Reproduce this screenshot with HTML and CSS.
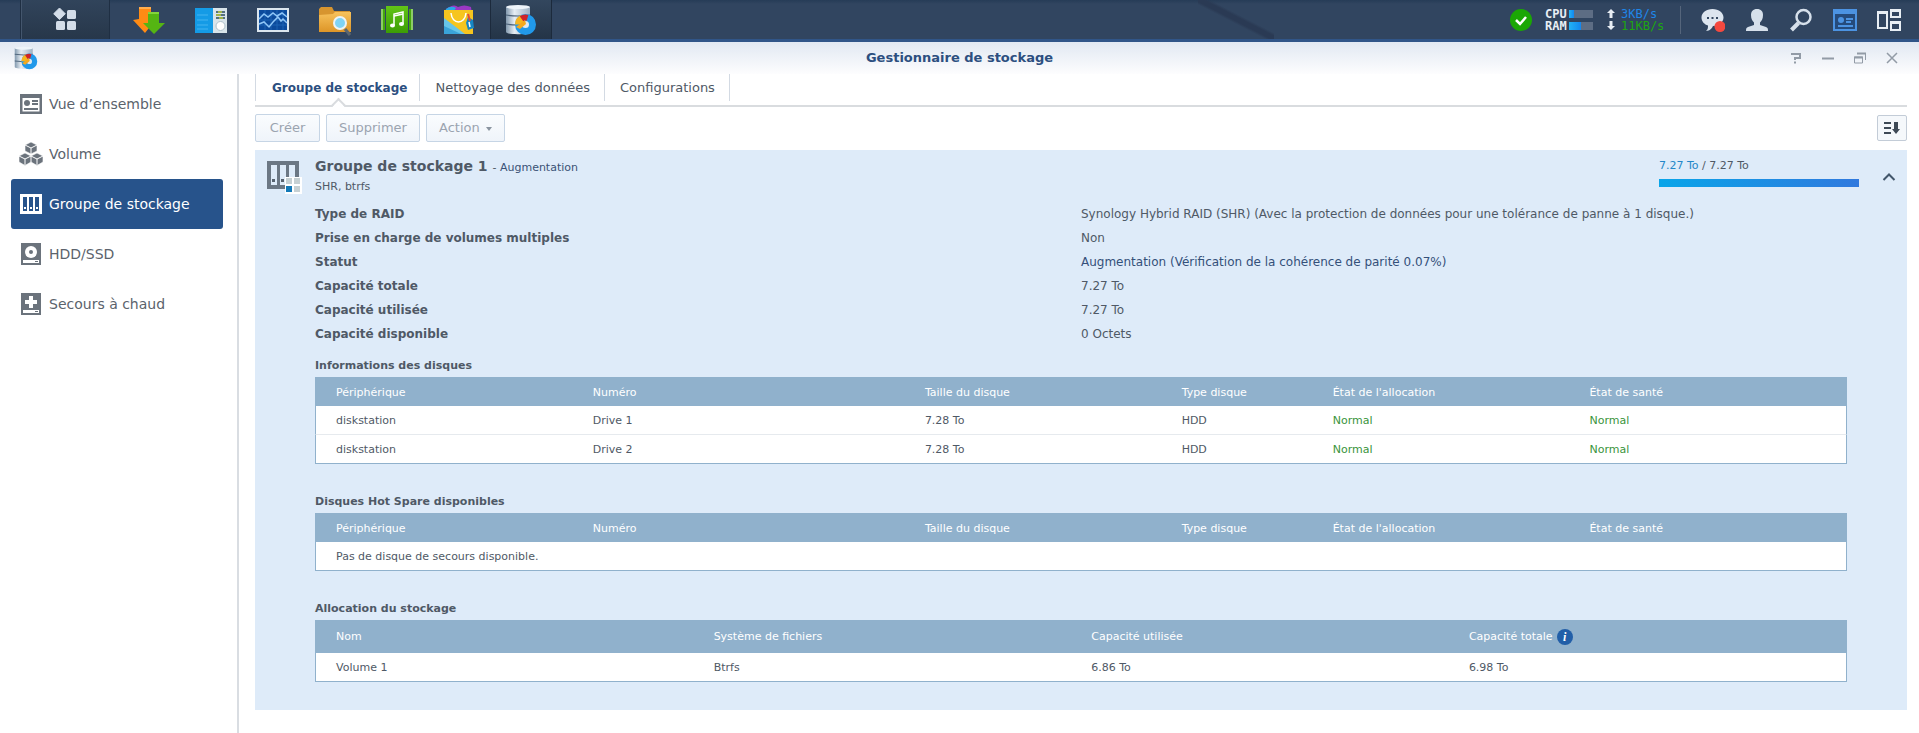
FILE: index.html
```html
<!DOCTYPE html>
<html lang="fr">
<head>
<meta charset="utf-8">
<title>Gestionnaire de stockage</title>
<link rel="stylesheet" href="styles.css">
</head>
<body>
<svg class="defs" aria-hidden="true">
  <defs>
    <linearGradient id="g-cyl" x1="0" x2="1"><stop offset="0" stop-color="#8299ae"/><stop offset=".35" stop-color="#e6edf3"/><stop offset="1" stop-color="#9db0c2"/></linearGradient>
    <linearGradient id="g-folder" x1="0" y1="0" x2="0" y2="1"><stop offset="0" stop-color="#f7c25c"/><stop offset="1" stop-color="#dd9527"/></linearGradient>
    <linearGradient id="g-green" x1="0" y1="0" x2="0" y2="1"><stop offset="0" stop-color="#62c417"/><stop offset="1" stop-color="#3c9d05"/></linearGradient>
    <symbol id="storage" viewBox="0 0 32 32">
      <path d="M1 3v25c0 3 23 3 24 0V3z" fill="url(#g-cyl)"/>
      <ellipse cx="13" cy="3" rx="12" ry="2" fill="#eef4f9"/>
      <path d="M1 11q12 2 24 0M1 20q11 2 24 0" stroke="#4a6077" stroke-width="1.200" fill="none"/>
      <circle cx="20.500" cy="20.500" r="7" fill="#dfe8ee" stroke="#2199ea" stroke-width="7"/>
      <path d="M13.500 20.500a7 7 0 0 1 4-6.300" fill="none" stroke="#f6b51e" stroke-width="7"/>
      <path d="M16.500 14.800a7 7 0 0 1 6-1" fill="none" stroke="#cf2329" stroke-width="6"/>
      <path d="M11 23l9-7 1 4-6 5z" fill="#f4a81c"/>
    </symbol>
  </defs>
</svg>

<header class="taskbar">
  <button class="menu-btn" aria-label="Menu principal">
    <svg width="24" height="24" viewBox="0 0 24 24" fill="#d3dde9"><path d="M6.500 0l5.800 5.800-5.800 5.800L.700 5.800z" stroke="#d3dde9" stroke-linejoin="round"/><rect x="14" y="2" width="9" height="9" rx="1.500"/><rect x="3" y="13" width="9" height="9" rx="1.500"/><rect x="14" y="13" width="9" height="9" rx="1.500"/></svg>
  </button>
  <nav class="apps" aria-label="Applications">
    <button class="app" aria-label="Download Station">
      <svg width="32" height="32" viewBox="0 0 32 32"><path d="M6 3h12v12h5L12 29 0 16l6-1z" fill="#ff8b14"/><path d="M6 3h12v2H6z" fill="#ffad4e"/><path d="M15 8h11v11h6L21 30 10 19h5z" fill="#55b513"/><path d="M15 8h11v2H15z" fill="#83d43a"/></svg>
    </button>
    <button class="app" aria-label="Panneau">
      <svg width="32" height="32" viewBox="0 0 32 32"><rect y="4" width="32" height="25" fill="#d8e4ea"/><rect y="4" width="18" height="25" fill="#149be6"/><path d="M2 11h11M2 16h11M2 21h11M2 25h11" stroke="#45b4f0"/><path d="M21 8h9M21 11h9M21 14h9" stroke="#29495e" stroke-width="1.500"/><path d="M23 8h4M21 11h5M24 14h4" stroke="#b9c93a" stroke-width="1.500"/><circle cx="25.500" cy="22" r="4.500" fill="#fff" stroke="#adc0cb"/></svg>
    </button>
    <button class="app" aria-label="Moniteur de ressources">
      <svg width="32" height="32" viewBox="0 0 32 32"><rect y="4" width="32" height="24" fill="#dce6ee"/><rect x="2" y="6" width="28" height="20" fill="#0b4a9c"/><path d="M8 6v20M14 6v20M20 6v20M26 6v20M2 11h28M2 16h28M2 21h28" stroke="#1c62b3"/><path d="M2 15l5-5 4 3 5-4 4 3 5-3 5 4M2 20l5-2 5 5 4-5 5-5 3 4 2-2 4 4" fill="none" stroke="#8fc6f7" stroke-width="1.500"/></svg>
    </button>
    <button class="app" aria-label="File Station">
      <svg width="32" height="32" viewBox="0 0 32 32"><path d="M0 5l2-2h11l2 4h16v21H0z" fill="#d7952f"/><path d="M0 11l14-1 2-2h16v20H0z" fill="url(#g-folder)"/><path d="M26 25l5 6" stroke="#5a6670" stroke-width="3"/><circle cx="21" cy="19" r="6" fill="#7fd3f4" stroke="#edf3f5" stroke-width="2"/></svg>
    </button>
    <button class="app" aria-label="Audio Station">
      <svg width="32" height="32" viewBox="0 0 32 32"><path d="M0 5h4v21H0zM28 5h4v21h-4z" fill="#44a70b"/><path d="M1 5v21M31 5v21" stroke="#d5f1c3"/><rect x="5" y="2" width="22" height="27" fill="url(#g-green)"/><path d="M13 21V10l9-2v12" fill="none" stroke="#fff" stroke-width="1.500"/><path d="M13 12l9-2" stroke="#fff" stroke-width="1.500"/><ellipse cx="11.500" cy="21.500" rx="2.500" ry="2" fill="#fff"/><ellipse cx="20.500" cy="20" rx="2.500" ry="2" fill="#fff"/></svg>
    </button>
    <button class="app" aria-label="Centre de paquets">
      <svg width="32" height="32" viewBox="0 0 32 32"><path d="M3 5q8-6 12-2 6-3 13 0l1 7H3z" fill="#9b38c4"/><path d="M3 5q5-4 10-1l-3 4H2z" fill="#29a9e8"/><path d="M1 6h29v24H1z" fill="#f6c51f"/><path d="M1 14l21 16H1z" fill="#67c5e9"/><path d="M1 22l17 8H1z" fill="#3aa4da"/><path d="M8 9c1 12 14 12 15 0" stroke="#fff" fill="none" stroke-width="1.500"/><path d="M25 13l5 3 1 8-6 2-2-7z" fill="#1686c4"/><path d="M25 10l2 7" stroke="#e64c37" stroke-width="2"/><path d="M26 18l1 5" stroke="#fff" stroke-width="1.500"/></svg>
    </button>
    <button class="app app-on" aria-label="Gestionnaire de stockage">
      <svg width="32" height="32"><use href="#storage"/></svg>
    </button>
  </nav>
  <div class="tray">
    <svg class="health" width="22" height="22" viewBox="0 0 22 22"><circle cx="11" cy="11" r="11" fill="#1ba705"/><path d="M6 11l4 4 6-7" fill="none" stroke="#fff" stroke-width="2.500"/></svg>
    <div class="load">
      <span>CPU</span><i class="meter"><b class="fill" style="width:20%"></b></i>
      <span>RAM</span><i class="meter"><b class="fill" style="width:48%"></b></i>
    </div>
    <div class="net">
      <svg width="8" height="9" viewBox="0 0 8 9" fill="#e8eef4"><path d="M4 0l4 4H5.500v5h-3V4H0z"/></svg><span class="up">3KB/s</span>
      <svg width="8" height="9" viewBox="0 0 8 9" fill="#e8eef4"><path d="M4 9l4-4H5.500V0h-3v5H0z"/></svg><span class="down">11KB/s</span>
    </div>
    <span class="split"></span>
    <button class="tray-btn" aria-label="Notifications"><svg width="24" height="24" viewBox="0 0 24 24"><path d="M11.500 1C5 1 .500 5 .500 9.500c0 4 3 7 6.500 8 0 2 0 4-2 5.500 4 0 6-3 7-5 6 0 10.500-4 10.500-8.500S18 1 11.500 1z" fill="#dce5ef"/><path d="M6 9h2v2H6zM10.500 9h2v2h-2zM15 9h2v2h-2z" fill="#344861"/><circle cx="19" cy="18.500" r="5.500" fill="#f4493f"/></svg></button>
    <button class="tray-btn" aria-label="Options"><svg width="22" height="24" viewBox="0 0 22 24"><path d="M11 1c4 0 6 2.500 6 6 0 4-1.500 6-3 7.500V17l6 2c2 .700 2 2 2 4H0c0-2 0-3.300 2-4l6-2v-2.500C6.500 13 5 11 5 7c0-3.500 2-6 6-6z" fill="#d6e0eb"/></svg></button>
    <button class="tray-btn" aria-label="Rechercher"><svg width="22" height="24" viewBox="0 0 22 24" fill="none" stroke="#d6e0eb"><circle cx="13.500" cy="9" r="7" stroke-width="2.500"/><path d="M8.500 15l-7 7" stroke-width="4"/></svg></button>
    <button class="tray-btn" aria-label="Widgets"><svg width="24" height="22" viewBox="0 0 24 22"><path d="M1 1h22v20H1z" fill="#254b7c" stroke="#4c93e2" stroke-width="2"/><path d="M1 1h22v4H1z" fill="#4c93e2"/><circle cx="8" cy="11" r="3" fill="#4c93e2"/><path d="M13 10h7M13 13h5M5 17h15" stroke="#4c93e2" stroke-width="2"/></svg></button>
    <button class="tray-btn" aria-label="Vue pilote"><svg width="24" height="22" viewBox="0 0 24 22" fill="none" stroke="#e8eef4" stroke-width="2"><path d="M1 3h9v16H1zM14 1h9v7h-9zM14 13h9v8h-9z"/><path d="M1 4h9M14 2h9M14 14h9"/></svg></button>
  </div>
</header>

<main class="window">
  <div class="titlebar">
    <svg class="title-icon" width="24" height="24"><use href="#storage"/></svg>
    <h1 class="title">Gestionnaire de stockage</h1>
    <div class="controls">
      <button aria-label="Aide"><svg width="12" height="12" viewBox="0 0 12 12"><path d="M1 2h9v4H5v2M5 9.500v2" fill="none" stroke="#929ba6" stroke-width="2"/></svg></button>
      <button aria-label="Réduire"><svg width="12" height="12" viewBox="0 0 12 12"><path d="M0 6.500h12" stroke="#929ba6" stroke-width="2"/></svg></button>
      <button aria-label="Restaurer"><svg width="12" height="12" viewBox="0 0 12 12" fill="none" stroke="#929ba6"><path d="M3 1.500h8.500V8M.500 5h8v6h-8z"/><path d="M3 1.500h9M0 5.500h9" stroke-width="2"/></svg></button>
      <button aria-label="Fermer"><svg width="12" height="12" viewBox="0 0 12 12"><path d="M1 1l10 10M11 1L1 11" stroke="#929ba6" stroke-width="1.500"/></svg></button>
    </div>
  </div>

  <div class="body">
    <nav class="sidebar" aria-label="Sections">
      <a class="item" href="#"><svg width="24" height="24" viewBox="0 0 24 24"><path d="M1 2h22v20H1z" fill="#6b737c"/><path d="M3.500 6h17v13.500h-17z" fill="#fff"/><circle cx="8" cy="11" r="3" fill="#6b737c"/><path d="M13 9h6M13 12h6M5 17h14" stroke="#6b737c" stroke-width="2"/></svg>Vue d’ensemble</a>
      <a class="item" href="#"><svg width="24" height="24" viewBox="0 0 24 24" fill="#6b737c" stroke="#fff" stroke-width=".600"><path d="M12 0l6 3v6l-6 3-6-3V3zM6 11l6 3v6l-6 3.500L0 20v-6zM18 11l6 3v6l-6 3.500-6-3.500v-6z"/><path d="M6 3l6 3 6-3M12 6v6M0 14l6 3 6-3 6 3 6-3M6 17v6M18 17v6" fill="none" stroke-width="1"/></svg>Volume</a>
      <a class="item item-on" href="#" aria-current="page"><svg width="24" height="24" viewBox="0 0 24 24"><path d="M1 2h22v20H1z" fill="#fff"/><path d="M4 5h4v14H4zM10 5h4v14h-4zM16 5h4v14h-4z" fill="#27538b"/><path d="M5 15h2v2H5zM11 15h2v2h-2zM17 15h2v2h-2z" fill="#fff"/></svg>Groupe de stockage</a>
      <a class="item" href="#"><svg width="24" height="24" viewBox="0 0 24 24"><path d="M2 1h20v22H2z" fill="#6b737c"/><circle cx="12" cy="10" r="6" fill="#fff"/><circle cx="12" cy="10" r="2" fill="#6b737c"/><path d="M4 18h16v3H4z" fill="#fff"/><path d="M16 19h3v1h-3z" fill="#6b737c"/></svg>HDD/SSD</a>
      <a class="item" href="#"><svg width="24" height="24" viewBox="0 0 24 24"><path d="M2 1h20v22H2z" fill="#6b737c"/><path d="M12 4v12M6 10h12" stroke="#fff" stroke-width="4"/><path d="M4 18h16v3H4z" fill="#fff"/><path d="M16 19h3v1h-3z" fill="#6b737c"/></svg>Secours à chaud</a>
    </nav>

    <section class="content">
      <div class="tabs" role="tablist">
        <button class="tab tab-on" role="tab" aria-selected="true">Groupe de stockage</button>
        <button class="tab" role="tab">Nettoyage des données</button>
        <button class="tab" role="tab">Configurations</button>
      </div>
      <div class="toolbar">
        <button class="btn" disabled>Créer</button>
        <button class="btn" disabled>Supprimer</button>
        <button class="btn" disabled>Action <span class="caret"></span></button>
        <button class="sort" aria-label="Trier"><svg width="16" height="14" viewBox="0 0 16 14"><path d="M0 2h7M0 7h7M0 12h7" stroke="#3f4a56" stroke-width="2"/><path d="M10 1h4v7h2l-4 5-4-5h2z" fill="#3f4a56"/></svg></button>
      </div>

      <article class="panel">
        <header class="pool">
          <svg class="pool-icon" width="36" height="36" viewBox="0 0 36 36"><path d="M1 3h32v28H1z" fill="#6b7784"/><path d="M5 7h6v20H5zM14 7h6v20h-6zM23 7h6v20h-6z" fill="#deebf9"/><path d="M6 21h3v3H6zM15 21h3v3h-3z" fill="#56626f"/><path d="M19 19h17v17H19z" fill="#fff"/><path d="M20 20h6v6h-6zM28 20h6v6h-6zM28 28h6v6h-6z" fill="#c6d0d3"/><path d="M20 28h6v6h-6z" fill="#1279b8"/></svg>
          <div class="pool-name">
            <h2>Groupe de stockage 1 <small>- <em>Augmentation</em></small></h2>
            <p>SHR, btrfs</p>
          </div>
          <div class="usage">
            <p><span class="used">7.27 To</span> / 7.27 To</p>
            <div class="usage-bar"></div>
          </div>
          <button class="fold" aria-label="Replier"><svg width="14" height="8" viewBox="0 0 14 8"><path d="M1.500 7L7 1.500 12.500 7" fill="none" stroke="#42566b" stroke-width="2"/></svg></button>
        </header>

        <div class="details">
          <dl class="facts">
            <dt>Type de RAID</dt><dd>Synology Hybrid RAID (SHR) (Avec la protection de données pour une tolérance de panne à 1 disque.)</dd>
            <dt>Prise en charge de volumes multiples</dt><dd>Non</dd>
            <dt>Statut</dt><dd class="state">Augmentation (Vérification de la cohérence de parité 0.07%)</dd>
            <dt>Capacité totale</dt><dd>7.27 To</dd>
            <dt>Capacité utilisée</dt><dd>7.27 To</dd>
            <dt>Capacité disponible</dt><dd>0 Octets</dd>
          </dl>

          <table class="grid drives">
            <caption>Informations des disques</caption>
            <colgroup><col class="c-dev"><col class="c-num"><col class="c-size"><col class="c-type"><col class="c-alloc"><col></colgroup>
            <thead><tr><th>Périphérique</th><th>Numéro</th><th>Taille du disque</th><th>Type disque</th><th>État de l'allocation</th><th>État de santé</th></tr></thead>
            <tbody>
              <tr><td>diskstation</td><td>Drive 1</td><td>7.28 To</td><td>HDD</td><td class="ok">Normal</td><td class="ok">Normal</td></tr>
              <tr><td>diskstation</td><td>Drive 2</td><td>7.28 To</td><td>HDD</td><td class="ok">Normal</td><td class="ok">Normal</td></tr>
            </tbody>
          </table>

          <table class="grid drives">
            <caption>Disques Hot Spare disponibles</caption>
            <colgroup><col class="c-dev"><col class="c-num"><col class="c-size"><col class="c-type"><col class="c-alloc"><col></colgroup>
            <thead><tr><th>Périphérique</th><th>Numéro</th><th>Taille du disque</th><th>Type disque</th><th>État de l'allocation</th><th>État de santé</th></tr></thead>
            <tbody><tr><td colspan="6">Pas de disque de secours disponible.</td></tr></tbody>
          </table>

          <table class="grid volumes">
            <caption>Allocation du stockage</caption>
            <colgroup><col class="c-vol"><col class="c-vol"><col class="c-vol"><col></colgroup>
            <thead><tr><th>Nom</th><th>Système de fichiers</th><th>Capacité utilisée</th><th><span class="with-info">Capacité totale <span class="info">i</span></span></th></tr></thead>
            <tbody><tr><td>Volume 1</td><td>Btrfs</td><td>6.86 To</td><td>6.98 To</td></tr></tbody>
          </table>
        </div>
      </article>
    </section>
  </div>
</main>
</body>
</html>
```
FILE: styles.css
```css
* { box-sizing: border-box; }
body {
  margin: 0;
  min-height: 100vh;
  display: flex;
  flex-direction: column;
  background: #fff;
  color: #4f5966;
  font: 13px/24px Verdana, "DejaVu Sans", sans-serif;
}
h1, h2, p, dl, dd { margin: 0; }
button { border: 0; padding: 0; background: none; color: inherit; font: inherit; }
svg { display: block; flex: none; }
.defs { position: absolute; width: 0; height: 0; }

/* Taskbar */
.taskbar {
  display: flex;
  height: 42px;
  padding-left: 20px;
  border-bottom: 3px solid #305588;
  background:
    linear-gradient(to top right, transparent 44%, #2a3a54 48%, #2a3a54 54%, transparent 58%) 65% 0 / 76px 39px no-repeat,
    linear-gradient(#263c57, #314560 4px, #314560);
}
.menu-btn {
  width: 90px;
  display: grid;
  place-items: center;
  border: solid #1f2f43;
  border-width: 0 1px;
  box-shadow: inset 1px 0 #44566d;
  background: linear-gradient(#31445b, #27374a);
}
.apps { display: flex; padding-left: 8px; }
.app { width: 62px; display: grid; place-items: center; }
.app-on {
  border: solid #1c2a3c;
  border-width: 0 1px;
  background: linear-gradient(#33475e, #243447);
}
.tray { display: flex; align-items: center; margin-left: auto; padding-right: 8px; }
.load, .net {
  display: grid;
  align-items: center;
  font: 12px/12px "DejaVu Sans Mono", monospace;
}
.load { grid-template-columns: 24px 24px; margin-left: 13px; color: #e8eef4; font-weight: bold; }
.meter { height: 8px; background: #5d6d84; }
.fill { display: block; height: 100%; background: linear-gradient(90deg, #22b3f5, #1287f0); }
.net { grid-template-columns: 8px 44px; column-gap: 6px; margin-left: 14px; }
.up { color: #1f86e8; }
.down { color: #1ea60f; }
.split { width: 1px; height: 28px; margin: 0 10px 0 15px; background: #55657b; }
.tray-btn { width: 44px; display: grid; place-items: center; }

/* Window frame */
.window { flex: 1; display: flex; flex-direction: column; }
.titlebar {
  display: grid;
  grid-template-columns: 1fr auto 1fr;
  align-items: center;
  height: 32px;
  padding: 0 14px;
  background: linear-gradient(#e1e8f2, #fdfdfe);
}
.title { color: #2c4f80; font-size: 13px; line-height: 16px; }
.controls { display: flex; justify-content: flex-end; gap: 20px; margin-right: 7px; }
.body { flex: 1; display: flex; }

/* Sidebar */
.sidebar { flex: none; width: 239px; padding: 5px 14px 0 11px; border-right: 2px solid #d9dde2; }
.item {
  display: flex;
  align-items: center;
  gap: 6px;
  height: 50px;
  padding-left: 8px;
  border-radius: 3px;
  color: #5b636c;
  font-size: 14px;
  text-decoration: none;
}
.item-on { background: #27538b; color: #fff; }

/* Content */
.content { flex: 1; min-width: 0; padding: 0 12px 20px 16px; }
.tabs { display: flex; height: 33px; border-bottom: 2px solid #d9dcdf; }
.tab {
  position: relative;
  height: 27px;
  padding: 0 14px 0 15px;
  border-right: 1px solid #d3dae3;
}
.tab:first-child { border-left: 1px solid #d3dae3; }
.tab-on { padding: 0 12px 0 16px; color: #2c4f80; font-size: 12px; font-weight: bold; }
.tab-on::after {
  content: "";
  position: absolute;
  left: 50%;
  bottom: -10px;
  width: 9px;
  height: 9px;
  margin-left: -5px;
  border: solid #d9dcdf;
  border-width: 2px 0 0 2px;
  background: linear-gradient(135deg, #fff 50%, transparent 50%);
  transform: rotate(45deg);
}
.toolbar { display: flex; align-items: center; gap: 6px; padding: 7px 0 8px; }
.btn {
  min-width: 65px;
  height: 28px;
  padding: 0 12px;
  border: 1px solid #c6d5e5;
  border-radius: 2px;
  background: linear-gradient(#fafcfe, #eff4fa);
  color: #9ba4b0;
}
.caret {
  display: inline-block;
  margin-left: 2px;
  vertical-align: middle;
  border: 3px solid transparent;
  border-top: 4px solid #8a94a0;
  border-bottom: 0;
}
.sort {
  width: 30px;
  height: 26px;
  margin-left: auto;
  display: grid;
  place-items: center;
  border: 1px solid #c3ccd7;
  border-radius: 2px;
  background: #f5f8fb;
}

/* Storage pool panel */
.panel { padding: 7px 11px 28px; background: #deebf9; }
.pool { display: flex; }
.pool-icon { margin: 1px 13px 0 0; }
.pool-name { flex: 1; font-size: 11px; line-height: 20px; }
.pool-name h2 { font-size: 14px; line-height: 18px; }
.pool-name small { font-size: 11px; font-weight: normal; }
.pool-name em { color: #3a5276; font-style: normal; }
.usage { width: 200px; padding-top: 1px; font-size: 11px; line-height: 16px; }
.used { color: #2387c8; }
.usage-bar { height: 8px; margin-top: 5px; background: linear-gradient(90deg, #09a5e9, #3079de); }
.fold { width: 37px; display: grid; place-items: center; padding-left: 22px; }
.details { padding: 5px 49px 0; }
.facts { display: grid; grid-template-columns: 1fr 1fr; font-size: 12px; }
.facts dt { font-weight: bold; }
.facts .state { color: #345079; }

/* Tables */
.grid {
  width: 100%;
  margin-top: 10px;
  table-layout: fixed;
  border-collapse: separate;
  border-spacing: 0;
  font-size: 11px;
  line-height: 16px;
}
.grid + .grid { margin-top: 28px; }
.grid caption { padding-bottom: 2px; line-height: 19px; font-weight: bold; text-align: left; }
.grid th, .grid td { height: 29px; padding: 2px 0 0 21px; text-align: left; }
.grid th { background: #90b1cc; color: #fff; font-weight: normal; }
.grid.volumes th { height: 33px; padding-top: 0; }
.grid td { border-bottom: 1px solid #e6eaee; background: #fff; }
.grid tr:last-child td { border-bottom-color: #90b1cc; }
.grid td:first-child { padding-left: 20px; border-left: 1px solid #90b1cc; }
.grid td:last-child { border-right: 1px solid #90b1cc; }
.c-dev, .c-size, .c-alloc { width: 16.76%; }
.c-num { width: 21.68%; }
.c-type { width: 9.86%; }
.c-vol { width: 24.65%; }
.grid .ok { color: #3a943c; }
.with-info { display: inline-flex; align-items: center; gap: 4px; }
.info {
  width: 16px;
  height: 16px;
  border-radius: 50%;
  background: #225fa8;
  font: italic bold 12px/16px "Liberation Serif", serif;
  text-align: center;
}
```
